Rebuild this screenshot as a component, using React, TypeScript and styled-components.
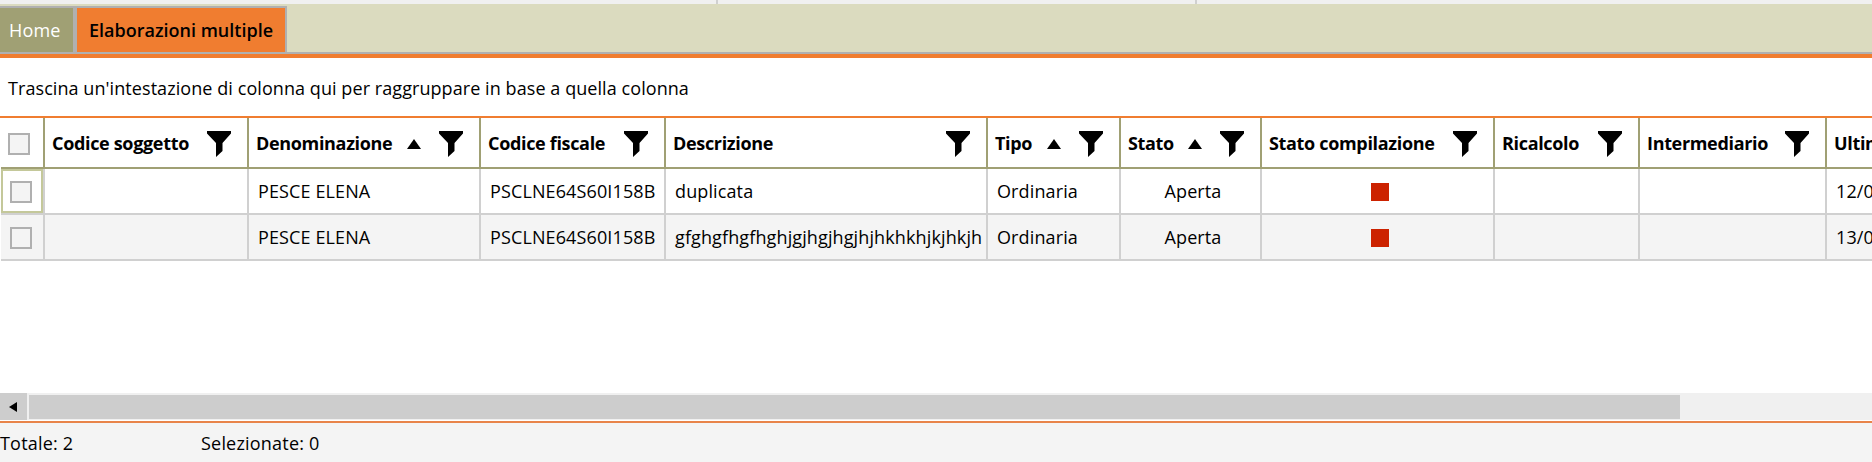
import React from 'react';
import styled, { createGlobalStyle } from 'styled-components';

const GRID_COLUMNS = '44px 204px 232px 185px 322px 133px 141px 233px 145px 187px 240px';

const GlobalStyle = createGlobalStyle`
    html, body {
        margin: 0;
        padding: 0;
        background: #fff;
    }
    body {
        font-family: "Open Sans", "Noto Sans", sans-serif;
        font-size: 18px;
        color: #000;
    }
`;

const Page = styled.div`
    display: flex;
    flex-direction: column;
    width: 1872px;
    height: 462px;
    overflow: hidden;
`;

const TopStrip = styled.div`
    display: flex;
    flex: none;
    height: 4px;
    background: #f0f0f0;
`;

const StripSegment = styled.div<{ $width: number }>`
    width: ${(p) => p.$width}px;
    border-right: 2px solid #d0d0d0;
    box-sizing: border-box;
`;

const TabBar = styled.div`
    display: flex;
    flex: none;
    align-items: flex-end;
    height: 50px;
    box-sizing: border-box;
    background: #dbdbbf;
    border-bottom: 2px solid #b0b0b0;
`;

const Tab = styled.div<{ $active?: boolean }>`
    display: flex;
    align-items: center;
    height: 46px;
    box-sizing: border-box;
    border-top: 2px solid #b0b0b0;
    border-right: 2px solid #b0b0b0;
    border-left: ${(p) => (p.$active ? '2px solid #b0b0b0' : 'none')};
    background: ${(p) => (p.$active ? '#f07d30' : '#a0a074')};
    color: ${(p) => (p.$active ? '#000' : '#fff')};
    font-weight: ${(p) => (p.$active ? 600 : 400)};
    padding-left: ${(p) => (p.$active ? '12px' : '9px')};
    width: ${(p) => (p.$active ? '212px' : '75px')};
    letter-spacing: ${(p) => (p.$active ? '0' : '0.2px')};
    white-space: nowrap;
`;

const AccentLine = styled.div`
    flex: none;
    height: 4px;
    background: #f07d30;
`;

const GroupHint = styled.div`
    display: flex;
    flex: none;
    align-items: center;
    height: 60px;
    padding-left: 8px;
    padding-top: 2px;
    box-sizing: border-box;
    letter-spacing: 0.07px;
    border-bottom: 2px solid #f07d30;
`;

const GridBody = styled.div`
    flex: 1;
    min-height: 0;
    padding-left: 1px;
    overflow: hidden;
`;

const HeaderRow = styled.div`
    display: grid;
    grid-template-columns: ${GRID_COLUMNS};
    width: max-content;
    height: 51px;
    box-sizing: border-box;
    border-bottom: 2px solid #a0a074;
`;

const HeaderCell = styled.div<{ $check?: boolean }>`
    display: flex;
    align-items: center;
    justify-content: ${(p) => (p.$check ? 'center' : 'flex-start')};
    border-right: 2px solid #a0a074;
    padding: ${(p) => (p.$check ? '0 6px 0 0' : '0 16px 0 7px')};
    box-sizing: border-box;
    font-weight: 700;
    letter-spacing: -0.33px;
    white-space: nowrap;
    overflow: hidden;
`;

const HeaderLabel = styled.span`
    flex: 1;
`;

const SortArrow = styled.svg`
    width: 14px;
    height: 10px;
    margin-top: 3px;
    margin-right: 18px;
    flex: none;
`;

const Funnel = styled.svg`
    width: 24px;
    height: 26px;
    flex: none;
    margin-top: 3px;
`;

const DataRow = styled.div<{ $alt?: boolean }>`
    display: grid;
    grid-template-columns: ${GRID_COLUMNS};
    width: max-content;
    height: 46px;
    box-sizing: border-box;
    border-bottom: 2px solid #d0d0d0;
    background: ${(p) => (p.$alt ? '#f4f4f4' : '#fff')};
`;

const DataCell = styled.div<{ $center?: boolean }>`
    display: flex;
    align-items: center;
    justify-content: ${(p) => (p.$center ? 'center' : 'flex-start')};
    border-right: 2px solid #d0d0d0;
    padding-left: ${(p) => (p.$center ? '5px' : '9px')};
    box-sizing: border-box;
    letter-spacing: 0.12px;
    white-space: nowrap;
    overflow: hidden;
`;

const CheckCell = styled.div`
    display: flex;
    border-right: 2px solid #d0d0d0;
`;

const FocusBox = styled.div<{ $focused?: boolean }>`
    flex: 1;
    display: flex;
    align-items: center;
    justify-content: center;
    box-sizing: border-box;
    padding-right: 2px;
    border: 2px solid ${(p) => (p.$focused ? '#c4c89a' : 'transparent')};
`;

const CheckBox = styled.div`
    width: 22px;
    height: 22px;
    margin-top: 2px;
    box-sizing: border-box;
    border: 2px solid #b0b0b0;
    background: #f4f4f4;
`;

const StatusSquare = styled.div`
    width: 18px;
    height: 18px;
    margin-top: 2px;
    background: #cc2200;
`;

const ScrollBar = styled.div`
    display: flex;
    flex: none;
    align-items: center;
    height: 27px;
    background: #f0f0f0;
`;

const ScrollButton = styled.div`
    display: flex;
    align-items: center;
    padding-left: 9px;
    box-sizing: border-box;
    width: 27px;
    height: 100%;
    background: #cdcdcd;
    margin-right: 2px;
`;

const ScrollThumb = styled.div`
    width: 1651px;
    height: 24px;
    background: #cdcdcd;
`;

const Footer = styled.div`
    display: flex;
    flex: none;
    align-items: center;
    height: 41px;
    box-sizing: border-box;
    margin-top: 1px;
    border-top: 2px solid #e8844a;
    background: #f4f4f4;
    letter-spacing: 0.2px;
`;

const FooterItem = styled.div<{ $width: number }>`
    width: ${(p) => p.$width}px;
`;

type Column = { label: string; sorted?: boolean };

const columns: Column[] = [
    { label: 'Codice soggetto' },
    { label: 'Denominazione', sorted: true },
    { label: 'Codice fiscale' },
    { label: 'Descrizione' },
    { label: 'Tipo', sorted: true },
    { label: 'Stato', sorted: true },
    { label: 'Stato compilazione' },
    { label: 'Ricalcolo' },
    { label: 'Intermediario' },
    { label: 'Ultima modifica' },
];

const rows = [
    { descrizione: 'duplicata', data: '12/03/2021', alt: false },
    { descrizione: 'gfghgfhgfhghjgjhgjhgjhjhkhkhjkjhkjh', data: '13/03/2021', alt: true },
];

const FunnelIcon = () => (
    <Funnel viewBox="0 0 24 26">
        <path d="M0 0H24V2.5L15.5 12V20L9 26V12L0 2.5Z" fill="#000" />
    </Funnel>
);

const App = () => (
    <Page>
        <GlobalStyle />
        <TopStrip>
            <StripSegment $width={718} />
            <StripSegment $width={479} />
        </TopStrip>
        <TabBar>
            <Tab>Home</Tab>
            <Tab $active>Elaborazioni multiple</Tab>
        </TabBar>
        <AccentLine />
        <GroupHint>Trascina un'intestazione di colonna qui per raggruppare in base a quella colonna</GroupHint>
        <GridBody>
            <HeaderRow>
                <HeaderCell $check>
                    <CheckBox />
                </HeaderCell>
                {columns.map((col) => (
                    <HeaderCell key={col.label}>
                        <HeaderLabel>{col.label}</HeaderLabel>
                        {col.sorted && (
                            <SortArrow viewBox="0 0 14 10">
                                <path d="M7 0L14 10H0Z" fill="#000" />
                            </SortArrow>
                        )}
                        <FunnelIcon />
                    </HeaderCell>
                ))}
            </HeaderRow>
            {rows.map((row, i) => (
                <DataRow key={row.descrizione} $alt={row.alt}>
                    <CheckCell>
                        <FocusBox $focused={i === 0}>
                            <CheckBox />
                        </FocusBox>
                    </CheckCell>
                    <DataCell />
                    <DataCell>PESCE ELENA</DataCell>
                    <DataCell>PSCLNE64S60I158B</DataCell>
                    <DataCell>{row.descrizione}</DataCell>
                    <DataCell>Ordinaria</DataCell>
                    <DataCell $center>Aperta</DataCell>
                    <DataCell $center>
                        <StatusSquare />
                    </DataCell>
                    <DataCell />
                    <DataCell />
                    <DataCell>{row.data}</DataCell>
                </DataRow>
            ))}
        </GridBody>
        <ScrollBar>
            <ScrollButton>
                <svg width="8" height="10" viewBox="0 0 8 10">
                    <path d="M8 0V10L0 5Z" fill="#000" />
                </svg>
            </ScrollButton>
            <ScrollThumb />
        </ScrollBar>
        <Footer>
            <FooterItem $width={201}>Totale: 2</FooterItem>
            <FooterItem $width={300}>Selezionate: 0</FooterItem>
        </Footer>
    </Page>
);

export default App;
